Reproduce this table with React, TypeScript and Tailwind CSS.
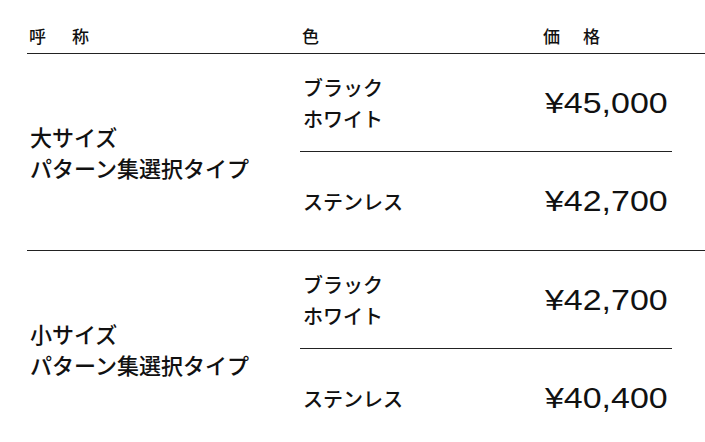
import React from "react";

const jp = { fontFamily: '"Noto Sans CJK JP", "Noto Sans", sans-serif' };

function Price({ v }: { v: string }) {
  return (
    <span
      className="inline-block origin-left scale-x-[1.17] text-[29px] leading-none text-[#111]"
      style={{ fontFamily: '"Liberation Sans", Arial, sans-serif' }}
    >
      {v}
    </span>
  );
}

function Row({ name, prices }: { name: string; prices: [string, string] }) {
  return (
    <div className="flex border-b border-[#222]">
      <div className="w-[273px] flex items-center pl-[3px]">
        <div className="text-[22px] leading-[31px] font-medium text-[#111]">
          <div>{name}</div>
          <div>パターン集選択タイプ</div>
        </div>
      </div>
      <div className="w-[372px] flex flex-col">
        <div className="h-[98px] flex items-center border-b border-[#222]">
          <div className="w-[243px] pl-[3px] text-[20px] leading-[31px] font-medium text-[#111]">
            <div>ブラック</div>
            <div>ホワイト</div>
          </div>
          <div className="pl-[2px] pt-[1px]">
            <Price v={prices[0]} />
          </div>
        </div>
        <div className="h-[98px] flex items-center">
          <div className="w-[243px] pl-[3px] text-[20px] leading-[31px] font-medium text-[#111]">
            ステンレス
          </div>
          <div className="pl-[2px] pt-[1px]">
            <Price v={prices[1]} />
          </div>
        </div>
      </div>
    </div>
  );
}

export default function App() {
  return (
    <div className="w-[705px] h-[442px] overflow-hidden bg-white" style={jp}>
      <div className="pl-[27px]">
        <div className="h-[54px] flex items-end pb-[9px] border-b border-[#222] text-[17px] leading-none font-medium text-[#111]">
          <div className="w-[273px] pl-[2px] flex">
            <span>呼</span>
            <span className="ml-[26px]">称</span>
          </div>
          <div className="w-[243px] pl-[2px]">色</div>
          <div className="flex">
            <span>価</span>
            <span className="ml-[23px]">格</span>
          </div>
        </div>
        <Row name="大サイズ" prices={["¥45,000", "¥42,700"]} />
        <Row name="小サイズ" prices={["¥42,700", "¥40,400"]} />
      </div>
    </div>
  );
}
